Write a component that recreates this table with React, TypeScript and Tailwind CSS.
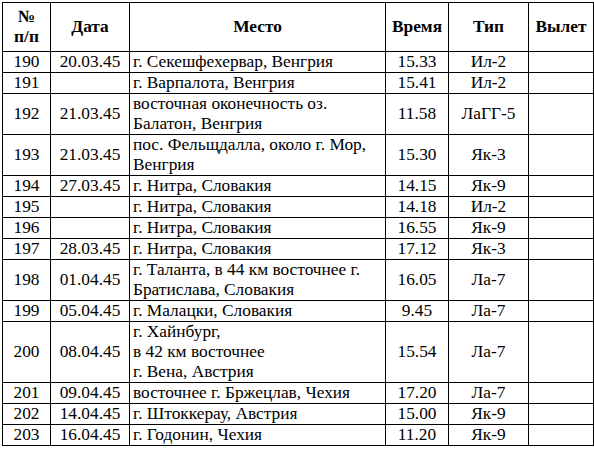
const rows: { n: string; date: string; place: string[]; time: string; type: string }[] = [
  { n: "190", date: "20.03.45", place: ["г. Секешфехервар, Венгрия"], time: "15.33", type: "Ил-2" },
  { n: "191", date: "", place: ["г. Варпалота, Венгрия"], time: "15.41", type: "Ил-2" },
  { n: "192", date: "21.03.45", place: ["восточная оконечность оз.", "Балатон, Венгрия"], time: "11.58", type: "ЛаГГ-5" },
  { n: "193", date: "21.03.45", place: ["пос. Фельщдалла, около г. Мор,", "Венгрия"], time: "15.30", type: "Як-3" },
  { n: "194", date: "27.03.45", place: ["г. Нитра, Словакия"], time: "14.15", type: "Як-9" },
  { n: "195", date: "", place: ["г. Нитра, Словакия"], time: "14.18", type: "Ил-2" },
  { n: "196", date: "", place: ["г. Нитра, Словакия"], time: "16.55", type: "Як-9" },
  { n: "197", date: "28.03.45", place: ["г. Нитра, Словакия"], time: "17.12", type: "Як-3" },
  { n: "198", date: "01.04.45", place: ["г. Таланта, в 44 км восточнее г.", "Братислава, Словакия"], time: "16.05", type: "Ла-7" },
  { n: "199", date: "05.04.45", place: ["г. Малацки, Словакия"], time: "9.45", type: "Ла-7" },
  { n: "200", date: "08.04.45", place: ["г. Хайнбург,", "в 42 км восточнее", "г. Вена, Австрия"], time: "15.54", type: "Ла-7" },
  { n: "201", date: "09.04.45", place: ["восточнее г. Бржецлав, Чехия"], time: "17.20", type: "Ла-7" },
  { n: "202", date: "14.04.45", place: ["г. Штоккерау, Австрия"], time: "15.00", type: "Як-9" },
  { n: "203", date: "16.04.45", place: ["г. Годонин, Чехия"], time: "11.20", type: "Як-9" },
];

const cell = "border border-black align-middle p-0";

export default function App() {
  return (
    <div className="bg-white w-[594px] h-[449px] pt-[2px] pl-[2px] text-black font-['Liberation_Serif','Times_New_Roman',serif] text-[17.33px] leading-[20px]">
      <table className="border-collapse table-fixed w-[591px]">
        <colgroup>
          <col className="w-[48px]" />
          <col className="w-[79px]" />
          <col className="w-[256px]" />
          <col className="w-[63px]" />
          <col className="w-[80px]" />
          <col className="w-[65px]" />
        </colgroup>
        <thead>
          <tr className="h-[49px] font-bold text-center">
            <th className={cell}>
              №
              <br />
              п/п
            </th>
            <th className={cell}>Дата</th>
            <th className={cell}>Место</th>
            <th className={cell}>Время</th>
            <th className={cell}>Тип</th>
            <th className={cell}>Вылет</th>
          </tr>
        </thead>
        <tbody>
          {rows.map((r) => (
            <tr key={r.n}>
              <td className={`${cell} text-center`}>{r.n}</td>
              <td className={`${cell} text-center`}>{r.date}</td>
              <td className={`${cell} pl-[3px] whitespace-nowrap`}>
                {r.place.map((p, i) => (
                  <div key={i}>{p}</div>
                ))}
              </td>
              <td className={`${cell} text-center`}>{r.time}</td>
              <td className={`${cell} text-center`}>{r.type}</td>
              <td className={cell}></td>
            </tr>
          ))}
        </tbody>
      </table>
    </div>
  );
}
